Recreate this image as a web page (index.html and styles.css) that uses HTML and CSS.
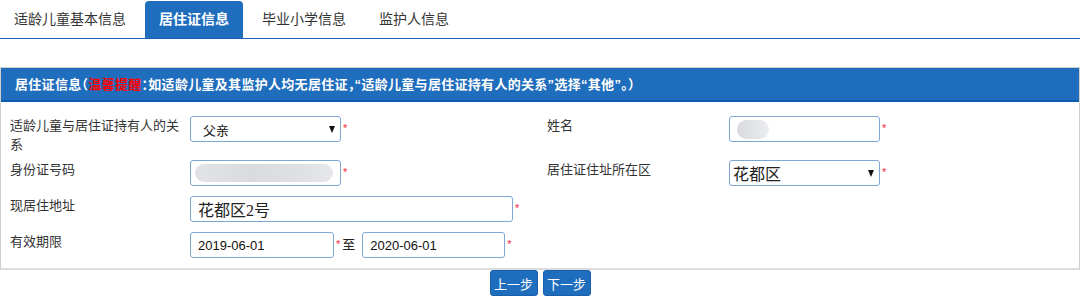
FILE: index.html
```html
<!DOCTYPE html>
<html lang="zh-CN">
<head>
<meta charset="utf-8">
<title>居住证信息</title>
<link rel="stylesheet" href="styles.css">
</head>
<body>
<div class="tabs">
  <div class="tab">适龄儿童基本信息</div>
  <div class="tab active">居住证信息</div>
  <div class="tab">毕业小学信息</div>
  <div class="tab">监护人信息</div>
</div>

<div class="panel">
  <div class="panel-head">居住证信息（<span class="warn">温馨提醒</span>：如适龄儿童及其监护人均无居住证，“适龄儿童与居住证持有人的关系”选择“其他”。）</div>
  <div class="panel-body">
    <div class="row">
      <div class="cell">
        <div class="label two">适龄儿童与居住证持有人的关系</div>
        <div class="field select w151"><span>父亲</span><i class="caret"></i></div>
        <span class="req">*</span>
      </div>
      <div class="cell right">
        <div class="label">姓名</div>
        <div class="field w151 pad7"><span class="blur small"></span></div>
        <span class="req">*</span>
      </div>
    </div>
    <div class="row">
      <div class="cell">
        <div class="label">身份证号码</div>
        <div class="field w151 pad4"><span class="blur long"></span></div>
        <span class="req">*</span>
      </div>
      <div class="cell right">
        <div class="label">居住证住址所在区</div>
        <div class="field select big w151 pad3"><span>花都区</span><i class="caret"></i></div>
        <span class="req">*</span>
      </div>
    </div>
    <div class="row">
      <div class="cell">
        <div class="label">现居住地址</div>
        <div class="field big w323 pad7">花都区2号</div>
        <span class="req">*</span>
      </div>
    </div>
    <div class="row">
      <div class="cell">
        <div class="label">有效期限</div>
        <div class="field w144 pad7">2019-06-01</div>
        <span class="req">*</span>
        <span class="to">至</span>
        <div class="field w143 pad7">2020-06-01</div>
        <span class="req">*</span>
      </div>
    </div>
  </div>
</div>

<div class="actions">
  <button class="btn">上一步</button>
  <button class="btn">下一步</button>
</div>
</body>
</html>
```

FILE: styles.css
```css
* { box-sizing: border-box; }

body {
  margin: 0;
  font-family: "Liberation Sans", "Noto Sans CJK SC", sans-serif;
  font-size: 13px;
  color: #333;
  background: #fff;
}

.tabs {
  display: flex;
  height: 39px;
  padding-top: 1px;
  border-bottom: 1px solid #1a63b5;
}

.tab {
  height: 37px;
  line-height: 37px;
  padding: 0 14px;
  margin-right: 5px;
  font-size: 14px;
  color: #333;
  white-space: nowrap;
}

.tab.active {
  background: #1f6dbd;
  color: #fff;
  font-weight: bold;
  border-radius: 4px 4px 0 0;
}

.panel {
  margin-top: 28px;
  border: 1px solid #cfcfcf;
  border-bottom: 2px solid #dcdcdc;
}

.panel-head {
  height: 34px;
  line-height: 33px;
  padding-left: 14px;
  background: #1f6dbd;
  border-bottom: 2px solid #0d5ab3;
  color: #fff;
  font-weight: bold;
  font-size: 13px;
  letter-spacing: 0.3px;
  font-feature-settings: "halt";
  white-space: nowrap;
}

.warn { color: #ff0000; }

.panel-body {
  padding: 14px 0 10px;
  display: flex;
  flex-direction: column;
  gap: 10px;
}

.row { display: flex; }

.cell {
  width: 540px;
  display: flex;
  align-items: flex-start;
}

.label {
  width: 189px;
  padding: 0 10px 0 9px;
  line-height: 19px;
  color: #333;
}

.label.two { margin-bottom: -4px; }

.cell.right .label { padding-left: 7px; }

.field {
  height: 26px;
  border: 1px solid #7ea7d4;
  border-radius: 3px;
  display: flex;
  align-items: center;
  color: #111;
  background: #fff;
  white-space: nowrap;
}

.w151 { width: 151px; }
.w323 { width: 323px; }
.w144 { width: 144px; }
.w143 { width: 143px; }
.pad3 { padding-left: 3px; }
.pad4 { padding-left: 4px; }
.pad7 { padding-left: 7px; }

.select {
  justify-content: space-between;
  padding: 0 5px 0 12px;
}

.select.pad3 { padding-left: 3px; }

.big {
  font-size: 16px;
  font-family: "Liberation Serif", "Noto Sans CJK SC", serif;
  color: #222;
}

.caret {
  width: 0;
  height: 0;
  border-left: 3.5px solid transparent;
  border-right: 3.5px solid transparent;
  border-top: 7px solid #111;
}

.blur {
  display: block;
  background: linear-gradient(90deg, #d9dadd, #e3e4e7 55%, #eceef0);
}

.blur.small {
  width: 32px;
  height: 19px;
  border-radius: 10px;
}

.blur.long {
  width: 138px;
  height: 18px;
  border-radius: 9px;
  background: linear-gradient(90deg, #e2e3e6, #dadbde 40%, #dedfe2 70%, #e6e7ea);
}

.req {
  color: #f2243c;
  font-size: 11px;
  line-height: 1;
  margin: 7px 0 0 2px;
}

.to {
  margin: 0 7px 0 2px;
  line-height: 26px;
  color: #222;
}

.actions {
  display: flex;
  justify-content: center;
  gap: 5px;
}

.btn {
  width: 48px;
  height: 26px;
  padding: 0;
  border: 1px solid #1a5fab;
  border-radius: 3px;
  background: #1f6dbd;
  color: #fff;
  font-family: "Liberation Sans", "Noto Sans CJK SC", sans-serif;
  font-size: 13px;
}
```
